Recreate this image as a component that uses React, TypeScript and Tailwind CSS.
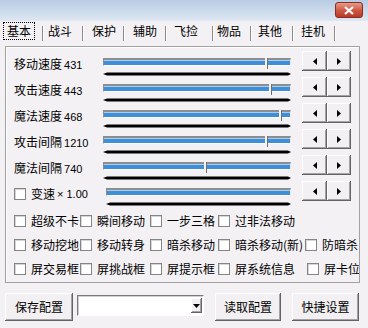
import React from "react";

const tabs = [
  { label: "基本", cls: "w-[44px] pl-[7px]", active: true },
  { label: "战斗", cls: "w-[40px] pl-[4px]" },
  { label: "保护", cls: "w-[41px] pl-[8px]" },
  { label: "辅助", cls: "w-[42px] pl-[8px]" },
  { label: "飞捡", cls: "w-[47px] pl-[7px]" },
  { label: "物品", cls: "w-[38px] pl-[3px]" },
  { label: "其他", cls: "w-[42px] pl-[6px]" },
  { label: "挂机", cls: "w-[42px] pl-[7px]" },
];

const sliders = [
  { label: "移动速度", value: "431", pos: 161 },
  { label: "攻击速度", value: "443", pos: 165 },
  { label: "魔法速度", value: "468", pos: 175 },
  { label: "攻击间隔", value: "1210", pos: 161 },
  { label: "魔法间隔", value: "740", pos: 100 },
];

const checkRows = [
  [
    { label: "超级不卡", cls: "w-[66px]" },
    { label: "瞬间移动", cls: "w-[70px]" },
    { label: "一步三格", cls: "w-[68px]" },
    { label: "过非法移动", cls: "w-[87px]" },
  ],
  [
    { label: "移动挖地", cls: "w-[66px]" },
    { label: "移动转身", cls: "w-[70px]" },
    { label: "暗杀移动", cls: "w-[68px]" },
    { label: "暗杀移动(新)", cls: "w-[87px]" },
    { label: "防暗杀", cls: "w-[60px]" },
  ],
  [
    { label: "屏交易框", cls: "w-[66px]" },
    { label: "屏挑战框", cls: "w-[70px]" },
    { label: "屏提示框", cls: "w-[68px]" },
    { label: "屏系统信息", cls: "w-[89px]" },
    { label: "屏卡位", cls: "w-[60px]" },
  ],
];

const raised =
  "bg-[#f2f0f2] shadow-[inset_-1px_-1px_#646464,inset_1px_1px_#ffffff,inset_-2px_-2px_#a3a3a3]";

function Box() {
  return (
    <span className="inline-block h-[12px] w-[12px] shrink-0 border border-[#858585] bg-white shadow-[inset_1px_1px_#d6d6d6]" />
  );
}

function Track({ pos, w }: { pos?: number; w: number }) {
  return (
    <div className="flex flex-col pt-[7px]" style={{ width: w }}>
      <div className="relative h-[8px] border-t-2 border-l border-t-[#8d8d8d] border-l-[#8d8d8d] border-b border-r border-b-white border-r-[#e8e8e8] bg-[#3f8fd8] shadow-[inset_0_1px_#a9cdef]">
        {pos !== undefined && (
          <div
            className="absolute top-[-2px] h-[11px] w-[3px] border-r border-[#6e6e6e] bg-[#f4f4f4]"
            style={{ left: pos }}
          />
        )}
      </div>
      <svg className="mt-[6px] block" width={w} height="4">
        <polygon points={`0,2 4,0.5 ${w - 3},0.5 ${w},2 ${w - 3},3.5 4,3.5`} fill="#000" />
      </svg>
    </div>
  );
}

function Arrow({ dir }: { dir: "l" | "r" }) {
  return (
    <svg width="4" height="7">
      <polygon points={dir === "l" ? "4,0 4,7 0,3.5" : "0,0 0,7 4,3.5"} fill="#000" />
    </svg>
  );
}

function Stepper() {
  return (
    <div className="ml-[11px] flex">
      <div className={`${raised} flex h-[20px] w-[25px] items-center justify-center`}>
        <Arrow dir="l" />
      </div>
      <div className={`${raised} flex h-[20px] w-[24px] items-center justify-center`}>
        <Arrow dir="r" />
      </div>
    </div>
  );
}

export default function App() {
  return (
    <div className="flex h-[328px] w-[368px] flex-col overflow-hidden bg-[#f4f1f4] font-['Noto_Sans_CJK_SC',sans-serif] text-[12px] text-black">
      {/* title bar */}
      <div className="flex h-[21px] justify-end bg-linear-to-b from-[#b8cce3] to-[#dfe8f3]">
        <div className="mt-[2px] mr-[5px] flex h-[16px] w-[28px] items-center justify-center rounded-[3px] border border-[#8a2d22] bg-linear-to-b from-[#e59a8c] via-[#cf5a45] to-[#b83a26]">
          <svg width="10" height="9">
            <path d="M1 1 L9 8 M9 1 L1 8" stroke="#fff" strokeWidth="2.2" />
          </svg>
        </div>
      </div>

      {/* tabs */}
      <div className="flex h-[20px] items-stretch">
        {tabs.map((t) => (
          <div key={t.label} className={`${t.cls} relative flex items-center leading-[16px]`}>
            {t.active ? (
              <span className="ml-[-4px] border border-dotted border-black px-[3px]">{t.label}</span>
            ) : (
              <span>{t.label}</span>
            )}
            <span className="absolute right-0 bottom-0 h-[15px] w-[2px] border-l border-[#8b8b8b] border-r border-r-white" />
          </div>
        ))}
      </div>

      {/* panel */}
      <div className="mt-[5px] ml-[5px] flex h-[237px] w-[355px] flex-col overflow-hidden border border-[#a2a2a2] pt-[4px] pl-[8px] shadow-[inset_1px_1px_#ffffff]">
        {sliders.map((s) => (
          <div key={s.label} className="flex h-[26px] items-start">
            <div className="flex w-[89px] items-baseline whitespace-nowrap leading-[26px]">
              <span>{s.label}</span>
              <span className="ml-[2px] font-['Liberation_Sans',sans-serif] text-[11px]">{s.value}</span>
            </div>
            <Track pos={s.pos} w={188} />
            <Stepper />
          </div>
        ))}
        <div className="flex h-[26px] items-start">
          <div className="flex h-[26px] w-[92px] items-center whitespace-nowrap">
            <Box />
            <span className="ml-[5px]">变速</span>
            <span className="ml-[2px] font-['Liberation_Sans',sans-serif] text-[11px]">× 1.00</span>
          </div>
          <Track w={185} />
          <Stepper />
        </div>

        <div className="mt-[2px] flex flex-col">
          {checkRows.map((row, i) => (
            <div key={i} className="flex h-[24px] items-center">
              {row.map((c) => (
                <div key={c.label} className={`${c.cls} flex shrink-0 items-center whitespace-nowrap`}>
                  <Box />
                  <span className="ml-[5px]">{c.label}</span>
                </div>
              ))}
            </div>
          ))}
        </div>
      </div>

      {/* bottom bar */}
      <div className="mt-[10px] flex items-start pl-[5px]">
        <div className={`${raised} flex h-[28px] w-[68px] items-center justify-center`}>保存配置</div>
        <div className="mt-[2px] ml-[4px] flex h-[21px] w-[127px] items-center border-t border-l border-[#7a7a7a] border-b border-r border-b-white border-r-white bg-white shadow-[inset_1px_1px_#d0d0d0]">
          <div className="flex-1" />
          <div className={`${raised} mr-[1px] flex h-[15px] w-[11px] items-center justify-center`}>
            <svg width="7" height="4">
              <polygon points="0,0 7,0 3.5,4" fill="#000" />
            </svg>
          </div>
        </div>
        <div className={`${raised} ml-[11px] flex h-[28px] w-[66px] items-center justify-center`}>读取配置</div>
        <div className={`${raised} ml-[11px] flex h-[28px] w-[67px] items-center justify-center`}>快捷设置</div>
      </div>
    </div>
  );
}
